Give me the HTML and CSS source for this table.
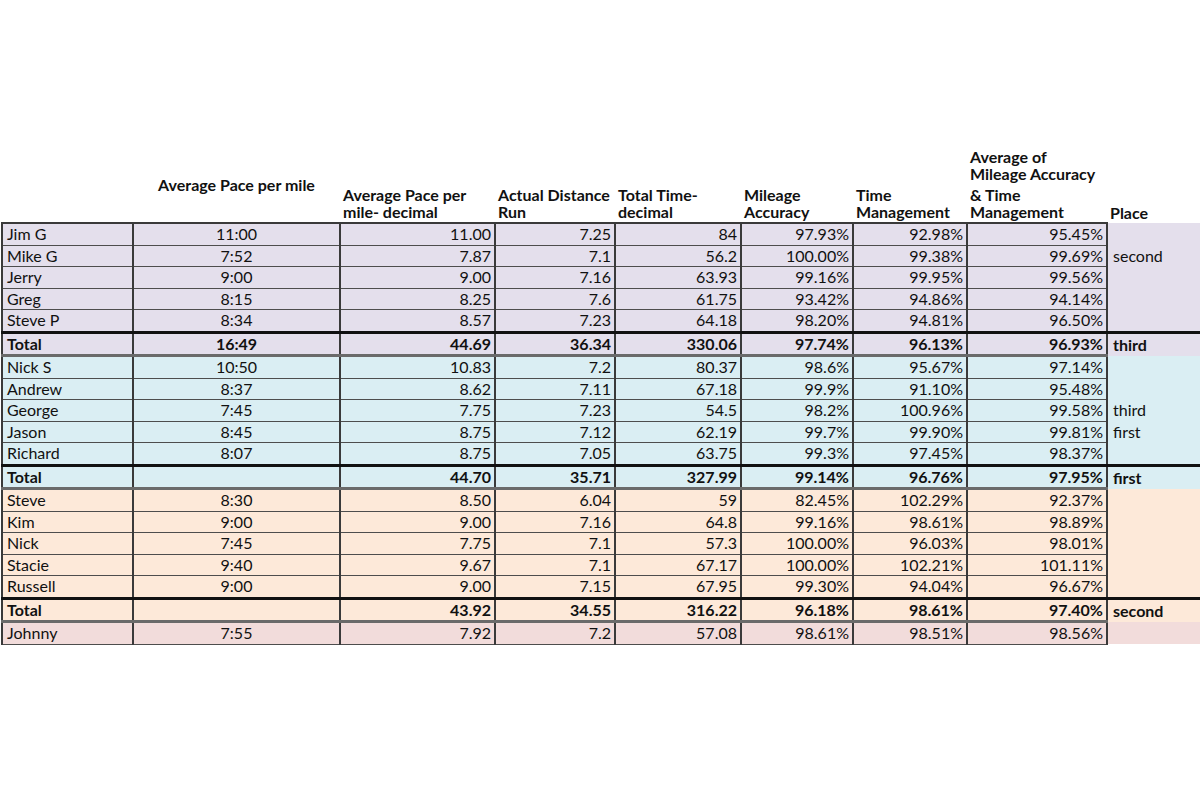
FILE: index.html
```html
<!DOCTYPE html>
<html>
<head>
<meta charset="utf-8">
<link rel="stylesheet" href="styles.css">
</head>
<body>
<table class="sheet">
  <colgroup>
    <col class="c-name"><col class="c-pace"><col class="c-dec"><col class="c-dist"><col class="c-time"><col class="c-mil"><col class="c-tm"><col class="c-avg"><col class="c-place">
  </colgroup>
  <thead>
    <tr class="head">
      <th></th>
      <th class="h-center"><div class="h-raised">Average Pace per mile</div></th>
      <th>Average Pace per<br>mile- decimal</th>
      <th>Actual Distance<br>Run</th>
      <th>Total Time-<br>decimal</th>
      <th>Mileage<br>Accuracy</th>
      <th>Time<br>Management</th>
      <th><div class="h-top">Average of<br>Mileage Accuracy</div><div>&amp; Time<br>Management</div></th>
      <th>Place</th>
    </tr>
  </thead>
  <tbody class="g-purple">
    <tr class="first"><td class="n">Jim G</td><td class="c">11:00</td><td>11.00</td><td>7.25</td><td>84</td><td>97.93%</td><td>92.98%</td><td>95.45%</td><td class="p"></td></tr>
    <tr><td class="n">Mike G</td><td class="c">7:52</td><td>7.87</td><td>7.1</td><td>56.2</td><td>100.00%</td><td>99.38%</td><td>99.69%</td><td class="p">second</td></tr>
    <tr><td class="n">Jerry</td><td class="c">9:00</td><td>9.00</td><td>7.16</td><td>63.93</td><td>99.16%</td><td>99.95%</td><td>99.56%</td><td class="p"></td></tr>
    <tr><td class="n">Greg</td><td class="c">8:15</td><td>8.25</td><td>7.6</td><td>61.75</td><td>93.42%</td><td>94.86%</td><td>94.14%</td><td class="p"></td></tr>
    <tr><td class="n">Steve P</td><td class="c">8:34</td><td>8.57</td><td>7.23</td><td>64.18</td><td>98.20%</td><td>94.81%</td><td>96.50%</td><td class="p"></td></tr>
    <tr class="total"><td class="n">Total</td><td class="c">16:49</td><td>44.69</td><td>36.34</td><td>330.06</td><td>97.74%</td><td>96.13%</td><td>96.93%</td><td class="p">third</td></tr>
  </tbody>
  <tbody class="g-blue">
    <tr class="first"><td class="n">Nick S</td><td class="c">10:50</td><td>10.83</td><td>7.2</td><td>80.37</td><td>98.6%</td><td>95.67%</td><td>97.14%</td><td class="p"></td></tr>
    <tr><td class="n">Andrew</td><td class="c">8:37</td><td>8.62</td><td>7.11</td><td>67.18</td><td>99.9%</td><td>91.10%</td><td>95.48%</td><td class="p"></td></tr>
    <tr><td class="n">George</td><td class="c">7:45</td><td>7.75</td><td>7.23</td><td>54.5</td><td>98.2%</td><td>100.96%</td><td>99.58%</td><td class="p">third</td></tr>
    <tr><td class="n">Jason</td><td class="c">8:45</td><td>8.75</td><td>7.12</td><td>62.19</td><td>99.7%</td><td>99.90%</td><td>99.81%</td><td class="p">first</td></tr>
    <tr><td class="n">Richard</td><td class="c">8:07</td><td>8.75</td><td>7.05</td><td>63.75</td><td>99.3%</td><td>97.45%</td><td>98.37%</td><td class="p"></td></tr>
    <tr class="total"><td class="n">Total</td><td class="c"></td><td>44.70</td><td>35.71</td><td>327.99</td><td>99.14%</td><td>96.76%</td><td>97.95%</td><td class="p">first</td></tr>
  </tbody>
  <tbody class="g-peach">
    <tr class="first"><td class="n">Steve</td><td class="c">8:30</td><td>8.50</td><td>6.04</td><td>59</td><td>82.45%</td><td>102.29%</td><td>92.37%</td><td class="p"></td></tr>
    <tr><td class="n">Kim</td><td class="c">9:00</td><td>9.00</td><td>7.16</td><td>64.8</td><td>99.16%</td><td>98.61%</td><td>98.89%</td><td class="p"></td></tr>
    <tr><td class="n">Nick</td><td class="c">7:45</td><td>7.75</td><td>7.1</td><td>57.3</td><td>100.00%</td><td>96.03%</td><td>98.01%</td><td class="p"></td></tr>
    <tr><td class="n">Stacie</td><td class="c">9:40</td><td>9.67</td><td>7.1</td><td>67.17</td><td>100.00%</td><td>102.21%</td><td>101.11%</td><td class="p"></td></tr>
    <tr><td class="n">Russell</td><td class="c">9:00</td><td>9.00</td><td>7.15</td><td>67.95</td><td>99.30%</td><td>94.04%</td><td>96.67%</td><td class="p"></td></tr>
    <tr class="total"><td class="n">Total</td><td class="c"></td><td>43.92</td><td>34.55</td><td>316.22</td><td>96.18%</td><td>98.61%</td><td>97.40%</td><td class="p">second</td></tr>
  </tbody>
  <tbody class="g-pink">
    <tr class="first"><td class="n">Johnny</td><td class="c">7:55</td><td>7.92</td><td>7.2</td><td>57.08</td><td>98.61%</td><td>98.51%</td><td>98.56%</td><td class="p"></td></tr>
  </tbody>
</table>
</body>
</html>
```
FILE: styles.css
```css
html, body {
  margin: 0;
  padding: 0;
  background: #ffffff;
}
body {
  padding-top: 136px;
  padding-left: 1px;
  font-family: Lato, "Open Sans", sans-serif;
  font-size: 16px;
  color: #111111;
}
.sheet {
  border-collapse: collapse;
  table-layout: fixed;
  width: 1199px;
}
.c-name { width: 131px; }
.c-pace { width: 207px; }
.c-dec { width: 155px; }
.c-dist { width: 120px; }
.c-time { width: 126px; }
.c-mil { width: 112px; }
.c-tm { width: 114px; }
.c-avg { width: 140px; }
.c-place { width: 94px; }

.head th {
  height: 84px;
  vertical-align: bottom;
  text-align: left;
  font-weight: 700;
  line-height: 17px;
  padding: 0 3px 2px 3px;
  white-space: nowrap;
  border: none;
}
.head th.h-center { text-align: center; }
.h-raised { padding-bottom: 27px; }
.h-top { line-height: 17px; margin-bottom: 4px; }

td {
  height: 20.5px;
  padding: 0 3px;
  line-height: 20px;
  text-align: right;
  white-space: nowrap;
  border-left: 2px solid #3a3a3a;
  border-right: 2px solid #3a3a3a;
  border-bottom: 1px solid #4d4d4d;
}
td.n { text-align: left; padding-left: 4px; }
td.c { text-align: center; }
td.p {
  text-align: left;
  padding-left: 5px;
  border-bottom: none;
  border-right: none;
}
tr.first td { border-top: 2px solid #3a3a3a; }
tr.first td.p { border-top: none; }
tbody + tbody tr.first td { border-top: 3px solid #6a6a6a; }
tr.total td { border-top: 3px solid #111111; font-weight: 700; }

.g-purple td { background: #e4dfec; }
.g-blue td { background: #daeef3; }
.g-peach td { background: #fde9d9; }
.g-pink td { background: #f2dcdb; }
```
